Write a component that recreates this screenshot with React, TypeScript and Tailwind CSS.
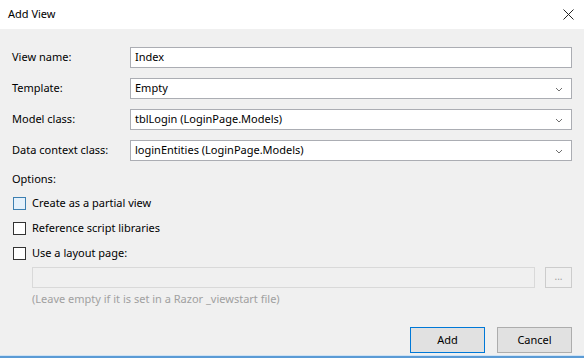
import React from "react";

const font = { fontFamily: '"Segoe UI", "Noto Sans", "Open Sans", sans-serif' };

function Chevron() {
  return (
    <svg width="8" height="5" viewBox="0 0 8 5" className="absolute right-[8px] top-[8px]">
      <path d="M1 1 L4 4 L7 1" fill="none" stroke="#707070" strokeWidth="1" />
    </svg>
  );
}

function Field({ value, select }: { value: string; select?: boolean }) {
  return (
    <div className="relative h-[21px] border border-[#abadb3] bg-white pl-[4px] flex items-center text-[11px] text-black">
      {value}
      {select && <Chevron />}
    </div>
  );
}

function Check({ label, hover }: { label: string; hover?: boolean }) {
  return (
    <div className="flex items-center h-[13px] text-[11px] text-black">
      <div
        className={
          hover
            ? "w-[13px] h-[13px] border border-[#3c7fb1] bg-[#e5f1fb] ml-[13px]"
            : "w-[13px] h-[13px] border border-[#333333] bg-white ml-[13px]"
        }
      />
      <span className="ml-[6px]">{label}</span>
    </div>
  );
}

export default function App() {
  const rows: [string, string, boolean][] = [
    ["View name:", "Index", false],
    ["Template:", "Empty", true],
    ["Model class:", "tblLogin (LoginPage.Models)", true],
    ["Data context class:", "loginEntities (LoginPage.Models)", true],
  ];
  return (
    <div className="w-[584px] h-[358px] flex flex-col bg-[#f0f0f0] overflow-hidden" style={font}>
      <div className="h-[29px] bg-white flex items-center justify-between pl-[8px] pr-[10px] shrink-0">
        <span className="text-[11px] text-black">Add View</span>
        <svg width="11" height="11" viewBox="0 0 11 11">
          <path d="M0.5 0.5 L10.5 10.5 M10.5 0.5 L0.5 10.5" stroke="#222" strokeWidth="1" />
        </svg>
      </div>
      <div className="flex-1 flex flex-col">
        <div className="grid grid-cols-[118px_1fr] gap-y-[10px] px-[12px] pt-[18px] items-center">
          {rows.map(([l, v, s]) => (
            <React.Fragment key={l}>
              <span className="text-[11px] text-black">{l}</span>
              <Field value={v} select={s} />
            </React.Fragment>
          ))}
        </div>
        <div className="px-[12px] mt-[10px] text-[11px] text-black leading-[16px]">Options:</div>
        <div className="flex flex-col gap-[12px] mt-[10px]">
          <Check label="Create as a partial view" hover />
          <Check label="Reference script libraries" />
          <Check label="Use a layout page:" />
        </div>
        <div className="flex items-center mt-[7px] pl-[32px] pr-[12px]">
          <div className="flex-1 h-[21px] border border-[#d9d9d9] bg-[#f0f0f0]" />
          <div className="ml-[10px] w-[27px] h-[21px] border border-[#cccccc] bg-[#f0f0f0] flex items-center justify-center text-[10px] text-[#a0a0a0] leading-none pb-[3px]">
            ...
          </div>
        </div>
        <div className="pl-[32px] mt-[3px] text-[11px] text-[#a0a0a0] leading-[16px]">
          (Leave empty if it is set in a Razor _viewstart file)
        </div>
        <div className="flex justify-end gap-[12px] pr-[12px] mt-[20px]">
          <div className="w-[75px] h-[26px] border border-[#0078d7] bg-[#e1e1e1] flex items-center justify-center text-[11px] text-black">
            Add
          </div>
          <div className="w-[75px] h-[26px] border border-[#adadad] bg-[#e1e1e1] flex items-center justify-center text-[11px] text-black">
            Cancel
          </div>
        </div>
      </div>
      <div className="h-[1px] bg-[#cfe3f5] shrink-0" />
      <div className="h-[2px] bg-[#5b9bd5] shrink-0" />
    </div>
  );
}
